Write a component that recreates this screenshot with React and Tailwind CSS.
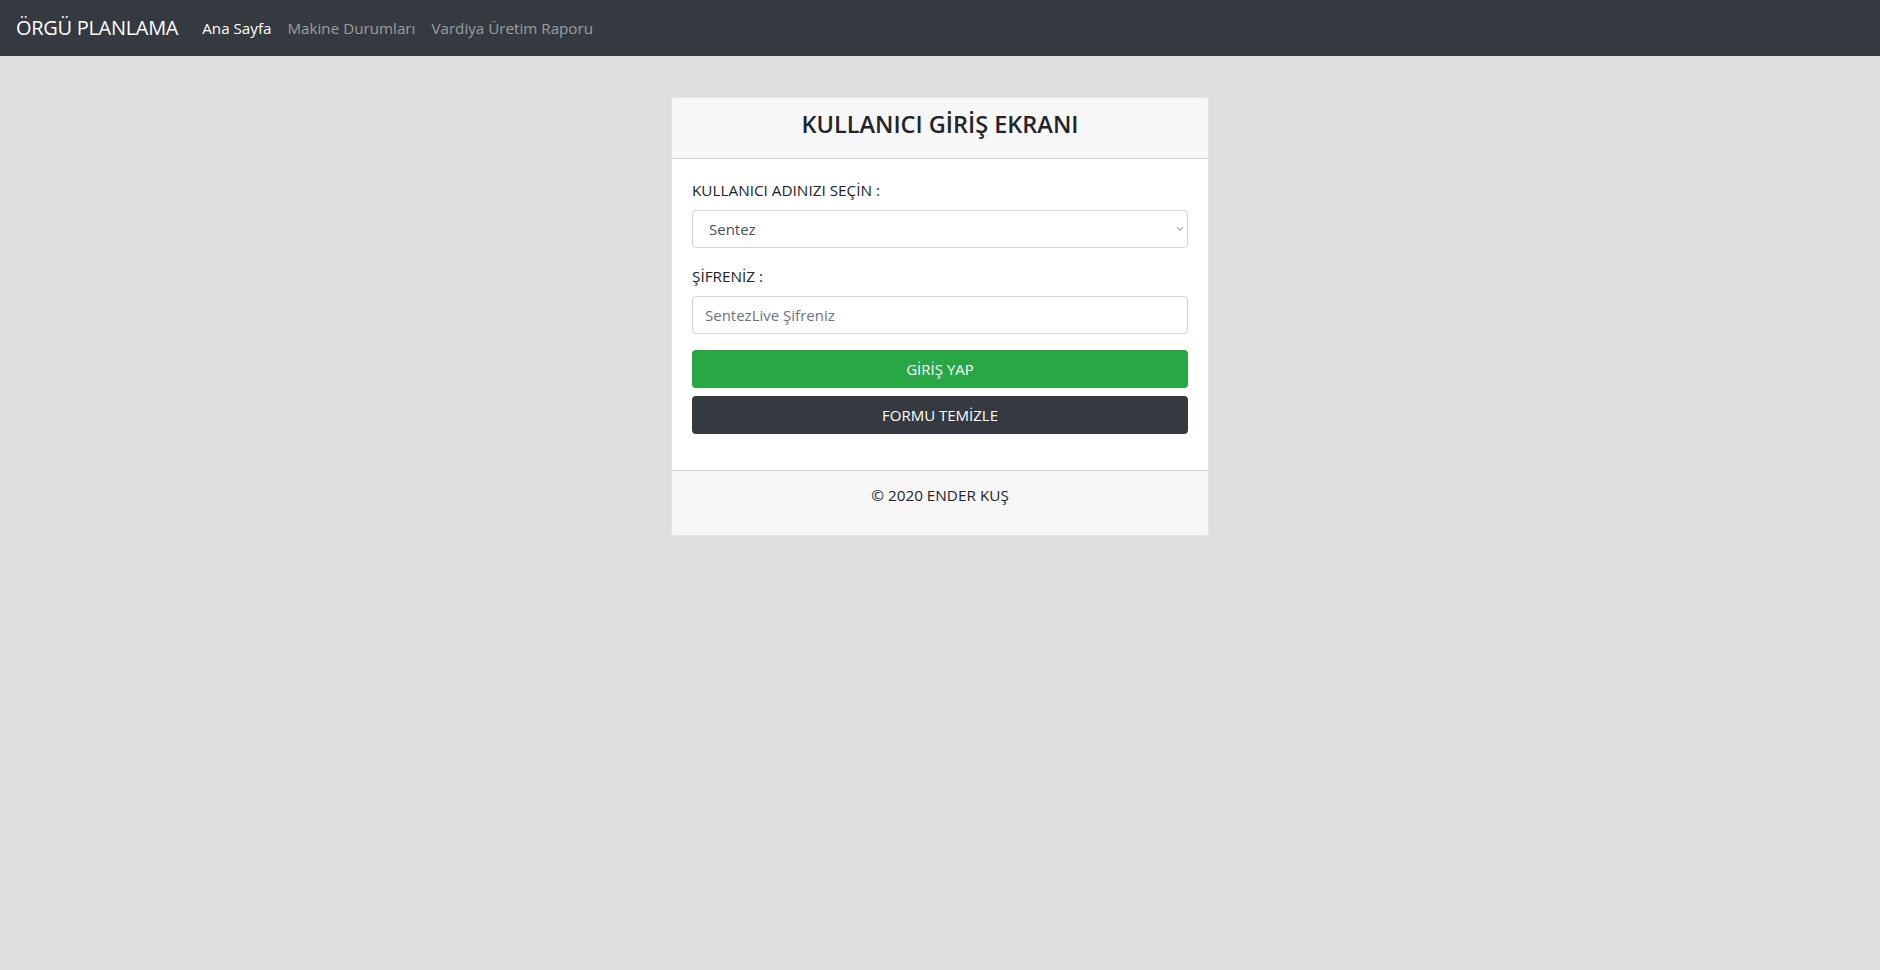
import React, { useState } from 'react';
import { ChevronDown } from 'lucide-react';

const font = { fontFamily: '"Open Sans", "Noto Sans", "Liberation Sans", sans-serif' };

export default function App() {
    const [user, setUser] = useState('Sentez');
    const [password, setPassword] = useState('');

    return (
        <div className="min-h-screen bg-[#dedede] text-[#212529] text-[16px]" style={font}>
            {/* Navbar */}
            <nav className="h-[56px] bg-[#343a40] flex items-center px-4">
                <a className="text-white text-[20px] mr-4 leading-[30px] tracking-[-0.3px]">ÖRGÜ PLANLAMA</a>
                <div className="flex items-center pt-[1px]">
                    <a className="px-2 text-white text-[15.2px]">Ana Sayfa</a>
                    <a className="px-2 text-white/50 text-[15.2px]">Makine Durumları</a>
                    <a className="px-2 text-white/50 text-[15.2px]">Vardiya Üretim Raporu</a>
                </div>
            </nav>

            {/* Login card */}
            <div className="flex justify-center pt-[41px]">
                <div className="w-[538px] bg-white rounded-[4px] border border-black/10 overflow-hidden">
                    <div className="bg-[#f7f7f7] border-b border-black/15 px-5 pt-[12px] pb-[19px] text-center">
                        <h4 className="text-[23.5px] font-semibold leading-[29px]">KULLANICI GİRİŞ EKRANI</h4>
                    </div>

                    <form className="px-5 pt-[19px] pb-[36px]" onSubmit={(e) => e.preventDefault()}>
                        <div className="mb-4">
                            <label className="block mb-2 text-[15.3px] leading-[24px]">KULLANICI ADINIZI SEÇİN :</label>
                            <div className="relative">
                                <select
                                    value={user}
                                    onChange={(e) => setUser(e.target.value)}
                                    className="w-full h-[38px] appearance-none bg-white border border-[#ced4da] rounded-[4px] pl-[16px] pr-8 text-[15px] text-[#495057] outline-none"
                                    style={font}
                                >
                                    <option>Sentez</option>
                                </select>
                                <ChevronDown className="absolute right-[3px] top-[14px] w-[10px] h-[10px] text-[#495057] pointer-events-none" strokeWidth={2} />
                            </div>
                        </div>

                        <div className="mb-4">
                            <label className="block mb-2 text-[15.3px] leading-[24px]">ŞİFRENİZ :</label>
                            <input
                                type="password"
                                value={password}
                                onChange={(e) => setPassword(e.target.value)}
                                placeholder="SentezLive Şifreniz"
                                className="w-full h-[38px] bg-white border border-[#ced4da] rounded-[4px] px-3 text-[15px] text-[#495057] placeholder:text-[#6c757d] outline-none"
                                style={font}
                            />
                        </div>

                        <button type="submit" className="w-full h-[38px] bg-[#28a745] text-white rounded-[4px] text-[15px] mb-2">
                            GİRİŞ YAP
                        </button>
                        <button type="reset" onClick={() => setPassword('')} className="w-full h-[38px] bg-[#343a40] text-white rounded-[4px] text-[15px]">
                            FORMU TEMİZLE
                        </button>
                    </form>

                    <div className="bg-[#f7f7f7] border-t border-black/15 px-5 pt-[12px] pb-[28px] text-center">
                        <p className="text-[15.3px] leading-[24px]">© 2020 ENDER KUŞ</p>
                    </div>
                </div>
            </div>
        </div>
    );
}
